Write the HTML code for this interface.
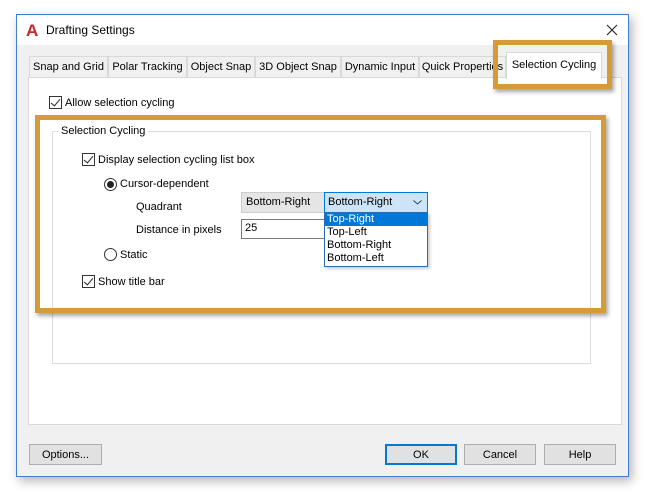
<!DOCTYPE html>
<html><head><style>
*{box-sizing:border-box;margin:0;padding:0}
body{width:646px;height:492px;background:#fff;position:relative;font-family:"Liberation Sans",sans-serif;font-size:11px;color:#000;overflow:hidden}
.a{position:absolute}
.dlg{left:16px;top:14px;width:613px;height:463px;background:#f0f0f0;border:1px solid #3c7fd0;box-shadow:3px 4px 10px rgba(0,0,0,.3)}
.tab{position:absolute;top:56px;height:22px;border:1px solid #d9d9d9;background:#f0f0f0;line-height:21px;text-align:center;font-size:11px}
.cb{position:absolute;width:13px;height:13px;border:1px solid #333;background:#fff}
.cb:after{content:"";position:absolute;left:3px;top:0px;width:4px;height:8px;border-right:1.5px solid #222;border-bottom:1.5px solid #222;transform:rotate(40deg)}
.rb{position:absolute;width:13px;height:13px;border:1px solid #333;border-radius:50%;background:#fff}
.btn{position:absolute;top:444px;height:21px;border:1px solid #adadad;background:#e1e1e1;text-align:center;line-height:20px}
.or{position:absolute;border:5px solid #d59b38;box-shadow:2px 3px 4px rgba(0,0,0,.35)}
</style></head><body>
<div class="a dlg"></div>
<div class="a" style="left:17px;top:15px;width:611px;height:30px;background:#fff"></div>
<div class="a" style="left:26px;top:21px;font-weight:bold;color:#c8262c;font-size:17px">A</div>
<div class="a" style="left:46px;top:23px;font-size:12px">Drafting Settings</div>
<svg class="a" style="left:606px;top:24px" width="12" height="12"><path d="M1 1L11 11M11 1L1 11" stroke="#222" stroke-width="1.1"/></svg>
<div class="a" style="left:28px;top:77px;width:594px;height:348px;background:#fff;border:1px solid #d9d9d9"></div>
<div class="tab" style="left:29px;width:79px">Snap and Grid</div>
<div class="tab" style="left:108px;width:79px">Polar Tracking</div>
<div class="tab" style="left:187px;width:68px">Object Snap</div>
<div class="tab" style="left:255px;width:86px">3D Object Snap</div>
<div class="tab" style="left:341px;width:78px">Dynamic Input</div>
<div class="tab" style="left:419px;width:87px;overflow:hidden;white-space:nowrap">Quick Properties</div>
<div class="tab" style="left:506px;top:52px;height:27px;width:96px;background:#fff;border-bottom:none;line-height:24px">Selection Cycling</div>
<div class="cb" style="left:49px;top:96px"></div>
<div class="a" style="left:65px;top:97px">Allow selection cycling</div>
<div class="a" style="left:52px;top:131px;width:539px;height:233px;border:1px solid #dcdcdc"></div>
<div class="a" style="left:58px;top:125px;background:#fff;padding:0 3px">Selection Cycling</div>
<div class="cb" style="left:82px;top:153px"></div>
<div class="a" style="left:98px;top:154px">Display selection cycling list box</div>
<div class="rb" style="left:104px;top:178px"></div>
<div class="a" style="left:107px;top:181px;width:7px;height:7px;border-radius:50%;background:#222"></div>
<div class="a" style="left:120px;top:178px">Cursor-dependent</div>
<div class="a" style="left:136px;top:201px">Quadrant</div>
<div class="a" style="left:136px;top:224px">Distance in pixels</div>
<div class="a" style="left:241px;top:192px;width:84px;height:21px;background:#e5e5e5;border:1px solid #ccc;padding:3px 4px">Bottom-Right</div>
<div class="a" style="left:324px;top:192px;width:104px;height:21px;background:#cce4f7;border:1px solid #0078d7;padding:3px 3px">Bottom-Right<svg style="position:absolute;right:5px;top:7px" width="9" height="5"><path d="M0.5 0.5L4.5 4L8.5 0.5" stroke="#444" fill="none"/></svg></div>
<div class="a" style="left:241px;top:219px;width:85px;height:20px;background:#fff;border:1px solid #7a7a7a;padding:2px 3px">25</div>
<div class="a" style="left:324px;top:212px;width:104px;height:55px;background:#fff;border:1px solid #2b6ab8;line-height:13px;box-shadow:2px 2px 3px rgba(0,0,0,.2)">
<div style="background:#0078d7;color:#fff;padding-left:2px">Top-Right</div>
<div style="padding-left:2px">Top-Left</div>
<div style="padding-left:2px">Bottom-Right</div>
<div style="padding-left:2px">Bottom-Left</div></div>
<div class="rb" style="left:104px;top:248px"></div>
<div class="a" style="left:120px;top:249px">Static</div>
<div class="cb" style="left:82px;top:275px"></div>
<div class="a" style="left:98px;top:276px">Show title bar</div>
<div class="or" style="left:35px;top:115px;width:571px;height:198px"></div>
<div class="or" style="left:493px;top:40px;width:119px;height:49px"></div>
<div class="btn" style="left:29px;width:73px">Options...</div>
<div class="btn" style="left:385px;width:72px;border:2px solid #0078d7;line-height:18px">OK</div>
<div class="btn" style="left:464px;width:72px">Cancel</div>
<div class="btn" style="left:544px;width:72px">Help</div>
</body></html>
